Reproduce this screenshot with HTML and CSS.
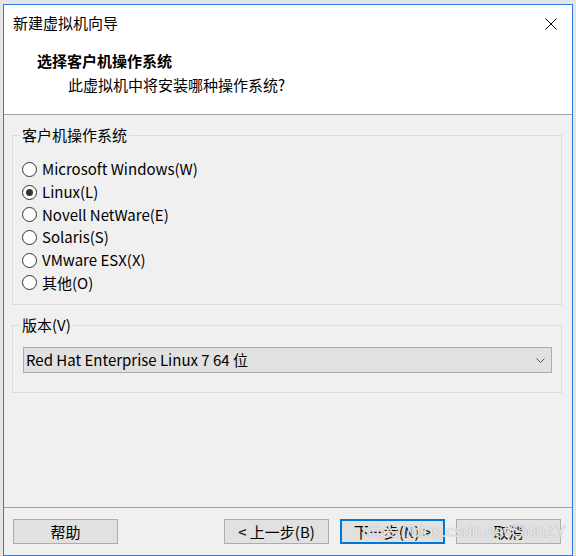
FILE: index.html
```html
<!DOCTYPE html>
<html lang="zh-CN">
<head>
  <meta charset="UTF-8" />
  <title>新建虚拟机向导</title>
  <link rel="stylesheet" href="styles.css">
</head>
<body>
  <div class="window">
    <div class="top">
      <div class="titlebar">
        <span class="title">新建虚拟机向导</span>
        <svg class="close" width="12" height="12" viewBox="0 0 12 12">
          <path d="M0.5 0.5 L11.5 11.5 M11.5 0.5 L0.5 11.5" stroke="#000" stroke-width="1" fill="none" />
        </svg>
      </div>
      <div class="header">
        <div class="heading">选择客户机操作系统</div>
        <div class="subheading">此虚拟机中将安装哪种操作系统?</div>
      </div>
    </div>

    <div class="content">
      <fieldset class="group os-group">
        <legend>客户机操作系统</legend>
        <div class="radio"><span class="dot"></span>Microsoft Windows(W)</div>
        <div class="radio checked"><span class="dot"></span>Linux(L)</div>
        <div class="radio"><span class="dot"></span>Novell NetWare(E)</div>
        <div class="radio"><span class="dot"></span>Solaris(S)</div>
        <div class="radio"><span class="dot"></span>VMware ESX(X)</div>
        <div class="radio"><span class="dot"></span>其他(O)</div>
      </fieldset>

      <fieldset class="group version-group">
        <legend>版本(V)</legend>
        <div class="select">
          <span>Red Hat Enterprise Linux 7 64 位</span>
          <svg width="9" height="5" viewBox="0 0 9 5">
            <path d="M0.5 0.5 L4.5 4.5 L8.5 0.5" stroke="#555" stroke-width="1" fill="none" />
          </svg>
        </div>
      </fieldset>
    </div>

    <div class="footer">
      <button class="btn">帮助</button>
      <div class="nav">
        <button class="btn">&lt; 上一步(B)</button>
        <button class="btn primary">下一步(N) &gt;</button>
        <button class="btn">取消</button>
      </div>
    </div>
  </div>

  <div class="watermark">https://blog.csdn.net/SionZY</div>
</body>
</html>
```

FILE: styles.css
```css
body {
  margin: 0;
  padding: 4px 0 0 3px;
  background-color: #e6e6e6;
  font-family: 'Noto Sans CJK SC', sans-serif;
  font-size: 15px;
  color: #000;
  height: 556px;
  box-sizing: border-box;
  overflow: hidden;
  position: relative;
}

.window {
  width: 570px;
  height: 552px;
  box-sizing: border-box;
  border: 1px solid #2f7ae5;
  background: #f0f0f0;
  display: flex;
  flex-direction: column;
}

.top {
  background: #fff;
  height: 110px;
  box-sizing: border-box;
  border-bottom: 1px solid #a0a0a0;
}

.titlebar {
  display: flex;
  justify-content: space-between;
  align-items: center;
  height: 20px;
  padding: 8px 15px 0 9px;
  line-height: 20px;
}

.close {
  margin-top: 2px;
}

.header {
  padding: 18px 0 0 33px;
}

.heading {
  font-weight: bold;
  line-height: 20px;
}

.subheading {
  line-height: 20px;
  margin: 4px 0 0 31px;
}

.content {
  flex: 1;
  padding: 10px 10px 0 8px;
}

.group {
  margin: 0;
  border: 1px solid #dcdcdc;
  padding: 0 9px;
  min-width: 0;
}

.group legend {
  padding: 0 2px;
  margin-left: -2px;
  line-height: 20px;
}

.os-group {
  padding-top: 13px;
  padding-bottom: 10px;
}

.radio {
  display: flex;
  align-items: center;
  height: 22.7px;
  line-height: 20px;
}

.dot {
  width: 13px;
  height: 13px;
  border: 1px solid #333;
  border-radius: 50%;
  background: #fff;
  margin-right: 5px;
  display: flex;
  align-items: center;
  justify-content: center;
}

.radio.checked .dot::after {
  content: '';
  width: 7px;
  height: 7px;
  border-radius: 50%;
  background: #333;
}

.version-group {
  margin-top: 10px;
  padding-top: 12px;
  padding-bottom: 19px;
}

.select {
  margin-left: 1px;
  height: 26px;
  box-sizing: border-box;
  border: 1px solid #adadad;
  background: #e1e1e1;
  display: flex;
  justify-content: space-between;
  align-items: center;
  padding: 0 6px 0 2px;
  line-height: 20px;
}

.footer {
  border-top: 1px solid #a0a0a0;
  padding: 11px 11px 11px 9px;
  display: flex;
  justify-content: space-between;
}

.nav {
  display: flex;
  gap: 11px;
}

.btn {
  width: 105px;
  height: 25px;
  margin: 0;
  padding: 0;
  border: 1px solid #adadad;
  background: #e1e1e1;
  font-family: inherit;
  font-size: 15px;
  color: #000;
  line-height: 20px;
}

.btn.primary {
  border: 2px solid #0078d7;
}

.watermark {
  position: absolute;
  left: 362px;
  top: 522px;
  font-family: 'Liberation Sans', sans-serif;
  font-size: 17px;
  color: rgba(255, 255, 255, 0.8);
  text-shadow: 0 0 1px #8a8a8a;
  letter-spacing: -0.3px;
}
```
